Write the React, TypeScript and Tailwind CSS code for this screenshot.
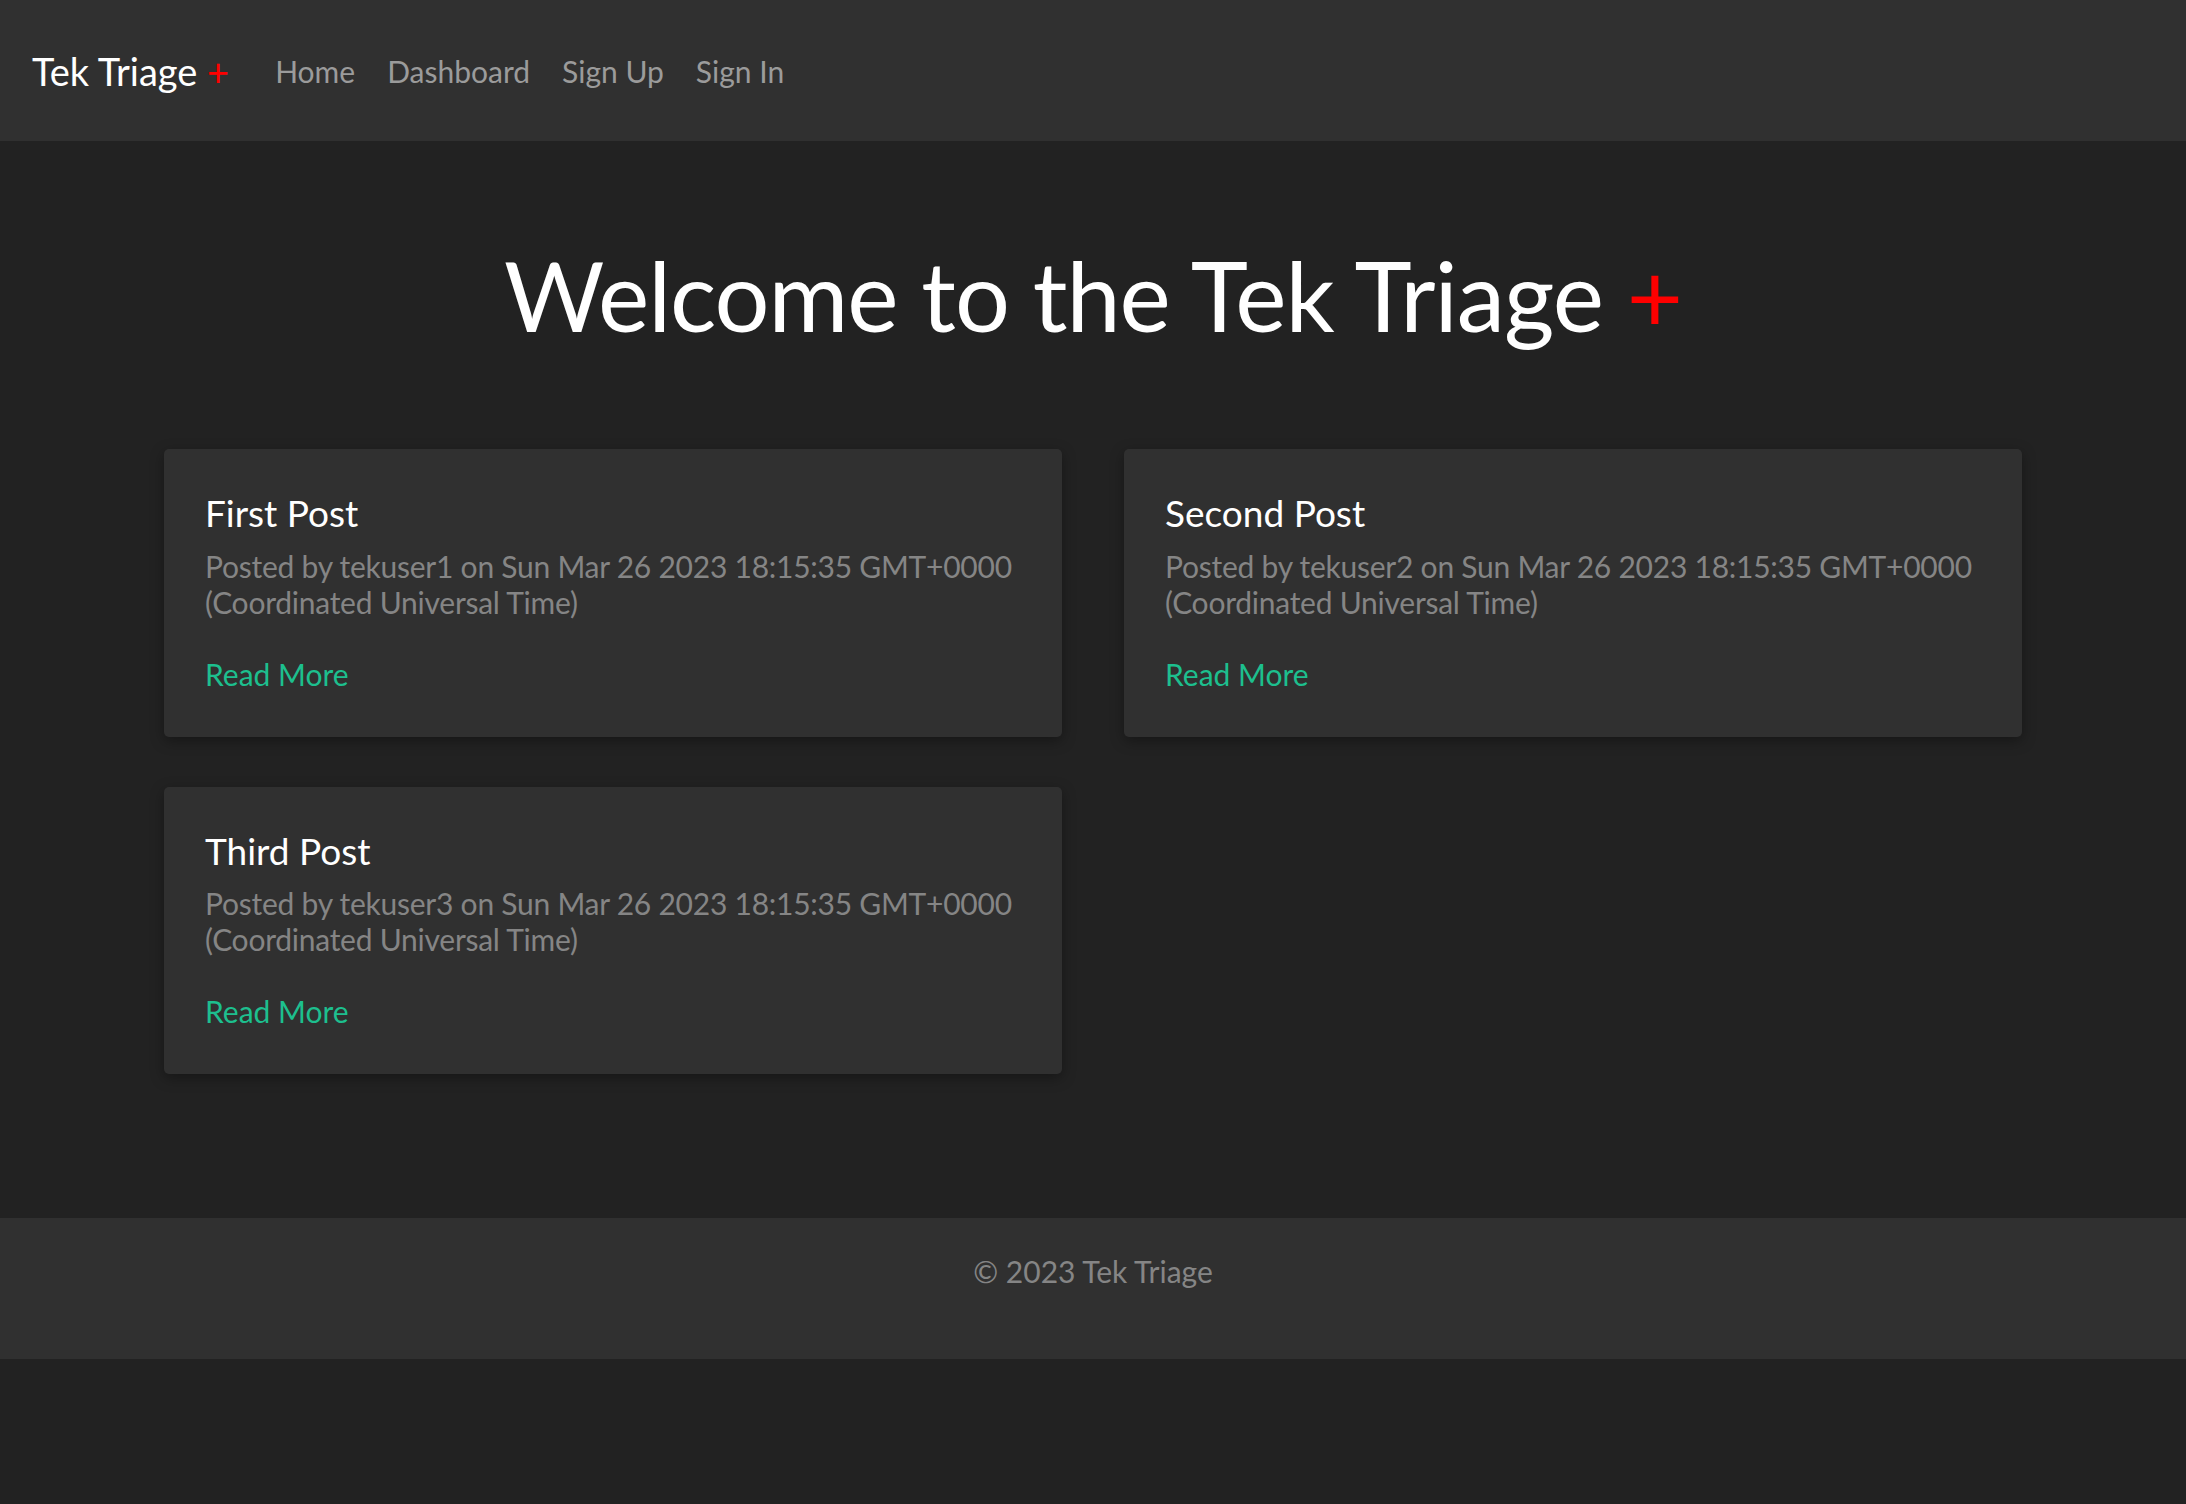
const posts = [
  { title: 'First Post', user: 'tekuser1' },
  { title: 'Second Post', user: 'tekuser2' },
  { title: 'Third Post', user: 'tekuser3' },
]

const date = 'Sun Mar 26 2023 18:15:35 GMT+0000 (Coordinated Universal Time)'

function PostCard({ title, user }: { title: string; user: string }) {
  return (
    <div className="bg-[#303030] rounded-[5px] shadow-[0_4px_14px_rgba(0,0,0,0.35)] pt-[42px] pb-[45px] px-[41px]">
      <h2 className="text-[37px] leading-[1.2] text-white">{title}</h2>
      <p className="mt-[12px] text-[30px] leading-[36px] tracking-[-0.25px] text-[#858585]">
        Posted by {user} on {date}
      </p>
      <a href="#" className="block mt-[36px] text-[30px] leading-[36px] text-[#1dbf8e]">
        Read More
      </a>
    </div>
  )
}

export default function App() {
  return (
    <div className="min-h-screen bg-[#222222] font-['Lato','Liberation_Sans',sans-serif]">
      {/* NAVBAR */}
      <nav className="h-[141px] bg-[#303030] flex items-center px-[32px]">
        <a href="#" className="text-[38px] text-white leading-none">
          Tek Triage <span className="text-[#ff0000]">+</span>
        </a>
        <ul className="flex items-center gap-[32px] ml-[46px] text-[30px] text-[#9b9b9b] leading-none">
          <li><a href="#">Home</a></li>
          <li><a href="#">Dashboard</a></li>
          <li><a href="#">Sign Up</a></li>
          <li><a href="#">Sign In</a></li>
        </ul>
      </nav>

      {/* MAIN */}
      <main className="px-[164px] pt-[96px] pb-[144px]">
        <h1 className="text-center text-[97px] leading-[1.2] tracking-[-1px] text-white">
          Welcome to the Tek Triage <span className="text-[#ff0000]">+</span>
        </h1>
        <div className="mt-[96px] grid grid-cols-2 gap-x-[62px] gap-y-[50px]">
          {posts.map((p) => (
            <PostCard key={p.title} title={p.title} user={p.user} />
          ))}
        </div>
      </main>

      {/* FOOTER */}
      <footer className="h-[141px] bg-[#303030] pt-[35px] text-center">
        <p className="text-[30px] leading-[36px] text-[#858585]">© 2023 Tek Triage</p>
      </footer>
    </div>
  )
}
